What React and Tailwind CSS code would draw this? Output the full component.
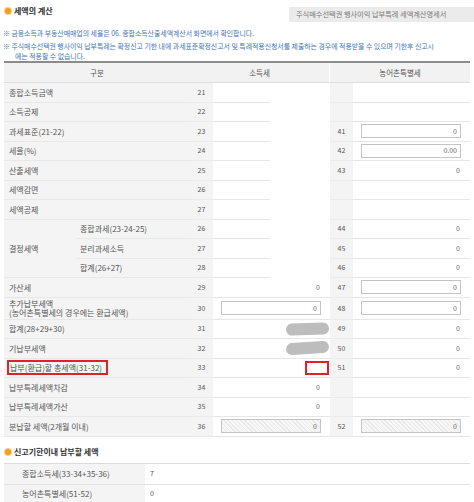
import React from 'react';

// 세액의 계산 – 종합소득세 신고서 화면 일부
const ROWS = [
  { label: '종합소득금액', n1: '21', partial: true },
  { label: '소득공제', n1: '22', partial: true },
  { label: '과세표준(21-22)', n1: '23', partial: true, n2: '41', v2: { t: 'input', v: '0' } },
  { label: '세율(%)', n1: '24', partial: true, n2: '42', v2: { t: 'input', v: '0.00' } },
  { label: '산출세액', n1: '25', partial: true, n2: '43', v2: { t: 'text', v: '0' } },
  { label: '세액감면', n1: '26', partial: true },
  { label: '세액공제', n1: '27', partial: true },
  { group: '결정세액', sub: '종합과세(23-24-25)', n1: '26', partial: true, n2: '44', v2: { t: 'text', v: '0' } },
  { sub: '분리과세소득', n1: '27', partial: true, n2: '45', v2: { t: 'text', v: '0' } },
  { sub: '합계(26+27)', n1: '28', partial: true, n2: '46', v2: { t: 'text', v: '0' } },
  { label: '가산세', n1: '29', v1: { t: 'text', v: '0' }, n2: '47', v2: { t: 'input', v: '0' } },
  { label: ['추가납부세액', '(농어촌특별세의 경우에는 환급세액)'], tall: true, n1: '30', v1: { t: 'input', v: '0' }, n2: '48', v2: { t: 'input', v: '0' } },
  { label: '합계(28+29+30)', n1: '31', v1: { t: 'blob', r: '-rotate-2' }, n2: '49', v2: { t: 'text', v: '0' } },
  { label: '기납부세액', n1: '32', v1: { t: 'blob', r: 'rotate-[-4deg]' }, n2: '50', v2: { t: 'text', v: '0' } },
  { label: '납부(환급)할 총세액(31-32)', red: true, n1: '33', v1: { t: 'redbox' }, n2: '51', v2: { t: 'text', v: '0' } },
  { label: '납부특례세액차감', n1: '34', v1: { t: 'text', v: '0' } },
  { label: '납부특례세액가산', n1: '35', v1: { t: 'text', v: '0' } },
  { label: '분납할 세액(2개월 이내)', n1: '36', v1: { t: 'hatch', v: '0' }, n2: '52', v2: { t: 'hatch', v: '0' } },
];

function Dot() {
  return <span className="w-[6px] h-[6px] rounded-full bg-[#f0a020] shadow-[0_0_0_1px_#f7d08a] shrink-0" />;
}

function Value({ val, partial, h }) {
  const base = `${h} bg-white flex items-center justify-end text-[7px] text-[#666]`;
  if (partial) {
    return (
      <div className={`${h} bg-white flex flex-col justify-end`}>
        <div className="h-px w-[57px] bg-[#e6e6e6]" />
      </div>
    );
  }
  if (!val) return <div className={`${base} border-b border-[#e6e6e6]`} />;
  if (val.t === 'text')
    return <div className={`${base} border-b border-[#e6e6e6] pr-[10px]`}>{val.v}</div>;
  if (val.t === 'input' || val.t === 'hatch')
    return (
      <div className={`${base} border-b border-[#e6e6e6] pl-[8px] pr-[9px]`}>
        <div
          className={`w-full h-[14px] border border-[#c4c4c4] flex items-center justify-end pr-[3px] ${
            val.t === 'hatch'
              ? 'bg-[repeating-linear-gradient(45deg,#e9e9e9_0px,#e9e9e9_1px,#f7f7f7_1px,#f7f7f7_3px)]'
              : 'bg-white'
          }`}
        >
          {val.v}
        </div>
      </div>
    );
  if (val.t === 'blob')
    return (
      <div className={`${base} border-b border-[#e6e6e6] pr-[1px]`}>
        <div className={`w-[43px] h-[12px] rounded-full bg-[#bdbdbd] ${val.r}`} />
      </div>
    );
  if (val.t === 'redbox')
    return (
      <div className={`${base} border-b border-[#e6e6e6] pr-[1px]`}>
        <div className="w-[24px] h-[14px] border-2 border-[#e0202a]" />
      </div>
    );
  return null;
}

export default function App() {
  return (
    <div className="w-[474px] h-[502px] bg-white overflow-hidden antialiased font-['Noto_Sans_CJK_KR','Noto_Sans',sans-serif] text-[#555]">
      {/* title + 명세서 버튼 */}
      <div className="flex items-start justify-between pl-[5px] pt-[7px]">
        <div className="flex items-center gap-[3px] h-[5px] mt-[1px]">
          <Dot />
          <span className="text-[8px] font-bold text-[#333] leading-none">세액의 계산</span>
        </div>
        <div className="w-[185px] h-[15px] bg-[#ebebeb] flex items-center pl-[7px] text-[7.2px] text-[#777] whitespace-nowrap">
          주식매수선택권 행사이익 납부특례 세액계산명세서
        </div>
      </div>

      {/* 안내문 */}
      <div className="pl-[3px] mt-[6px] text-[6.9px] text-[#3f76b8] leading-[11px] whitespace-nowrap">
        <div>※ 금융소득과 부동산매매업의 세율은 06. 종합소득산출세액계산서 화면에서 확인합니다.</div>
        <div className="mt-[2px]">
          ※ 주식매수선택권 행사이익 납부특례는 확정신고 기한 내에 과세표준확정신고서 및 특례적용신청서를 제출하는 경우에 적용받을 수 있으며 기한후 신고시
        </div>
        <div className="pl-[12px] leading-[9px]">에는 적용할 수 없습니다.</div>
      </div>

      {/* 세액 계산 표 */}
      <div className="mx-[4px] border-t-2 border-[#8c8c8c] grid grid-cols-[72px_114px_23px_117px_23px_117px] text-[8px] leading-[9px]">
        <div className="col-span-2 h-[20px] bg-[#f2f2f2] border-b border-[#dedede] flex items-center justify-center text-[7.5px]">구분</div>
        <div className="col-span-2 h-[20px] bg-[#f2f2f2] border-b border-[#dedede] border-r border-r-white flex items-center justify-center text-[7.5px]">소득세</div>
        <div className="col-span-2 h-[20px] bg-[#f2f2f2] border-b border-[#dedede] flex items-center justify-center text-[7.5px]">농어촌특별세</div>

        {ROWS.map((r, i) => {
          const h = r.tall ? 'h-[22px]' : 'h-[19.5px]';
          return (
            <React.Fragment key={i}>
              {r.group && (
                <div className="row-span-3 bg-[#f4f4f4] border-b border-[#e8e8e8] pl-[5px] flex items-center">{r.group}</div>
              )}
              {r.sub ? (
                <div className={`col-start-2 ${h} bg-[#f4f4f4] border-b border-[#e8e8e8] pl-[4px] flex items-center`}>{r.sub}</div>
              ) : (
                <div className={`col-span-2 ${h} bg-[#f4f4f4] border-b border-[#e8e8e8] pl-[3px] flex items-center`}>
                  {Array.isArray(r.label) ? (
                    <div className="pl-[2px] leading-[9.5px]">
                      <div>{r.label[0]}</div>
                      <div>{r.label[1]}</div>
                    </div>
                  ) : r.red ? (
                    <div className="w-[101px] h-[15px] border-2 border-[#e0202a] flex items-center pl-[1px] whitespace-nowrap">{r.label}</div>
                  ) : (
                    <span className="pl-[2px]">{r.label}</span>
                  )}
                </div>
              )}
              <div className={`${h} bg-[#f4f4f4] border-b border-[#ececec] flex items-center justify-center text-[7px]`}>{r.n1}</div>
              <Value val={r.v1} partial={r.partial} h={h} />
              <div className={`${h} bg-[#f4f4f4] border-b border-[#ececec] flex items-center justify-center text-[7px]`}>{r.n2}</div>
              <Value val={r.v2} h={h} />
            </React.Fragment>
          );
        })}
      </div>

      {/* 신고기한이내 납부할 세액 */}
      <div className="flex items-center gap-[3px] pl-[5px] mt-[11px]">
        <Dot />
        <span className="text-[8px] font-bold text-[#333] leading-none">신고기한이내 납부할 세액</span>
      </div>
      <div className="mx-[4px] mt-[7px] border-t border-[#dcdcdc] grid grid-cols-[141px_1fr] text-[8px]">
        <div className="h-[21px] bg-[#f4f4f4] border-b border-[#e3e3e3] pl-[18px] flex items-center">종합소득세(33-34+35-36)</div>
        <div className="h-[21px] border-b border-[#e3e3e3] pl-[5px] flex items-center text-[7px]">7</div>
        <div className="h-[19px] bg-[#f4f4f4] border-b border-[#e3e3e3] pl-[18px] flex items-center">농어촌특별세(51-52)</div>
        <div className="h-[19px] border-b border-[#e3e3e3] pl-[5px] flex items-center text-[7px]">0</div>
      </div>
    </div>
  );
}
